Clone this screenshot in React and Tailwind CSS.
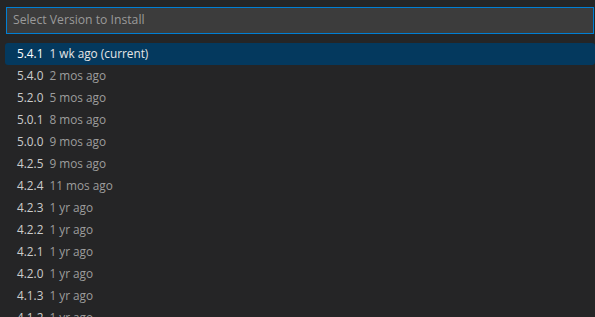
const versions = [
  ['5.4.1', '1 wk ago (current)'],
  ['5.4.0', '2 mos ago'],
  ['5.2.0', '5 mos ago'],
  ['5.0.1', '8 mos ago'],
  ['5.0.0', '9 mos ago'],
  ['4.2.5', '9 mos ago'],
  ['4.2.4', '11 mos ago'],
  ['4.2.3', '1 yr ago'],
  ['4.2.2', '1 yr ago'],
  ['4.2.1', '1 yr ago'],
  ['4.2.0', '1 yr ago'],
  ['4.1.3', '1 yr ago'],
  ['4.1.2', '1 yr ago'],
];

export default function App() {
  return (
    <div className="h-[317px] w-[595px] overflow-hidden bg-[#252526] font-['Segoe_UI','Open_Sans',sans-serif] text-[11.8px]">
      <div className="pl-[6px] pr-[1px] pt-[7px]">
        <div className="flex h-[27px] items-center border border-[#007fd4] bg-[#3c3c3c] px-[6px] text-[12.2px] text-[#9a9a9a]">
          Select Version to Install
        </div>
      </div>
      <div className="mt-[9px] pl-[5px]">
        {versions.map(([v, d], i) => (
          <div key={v}
            className={`flex h-[22px] items-center pl-[12px] ${i === 0 ? 'rounded-[3px] bg-[#04395e] text-white' : 'text-[#cccccc]'}`}>
            <span className="mr-[6px]">{v}</span>
            <span className={i === 0 ? 'text-[#e6e6e6]' : 'text-[#9d9d9d]'}>{d}</span>
          </div>
        ))}
      </div>
    </div>
  );
}
